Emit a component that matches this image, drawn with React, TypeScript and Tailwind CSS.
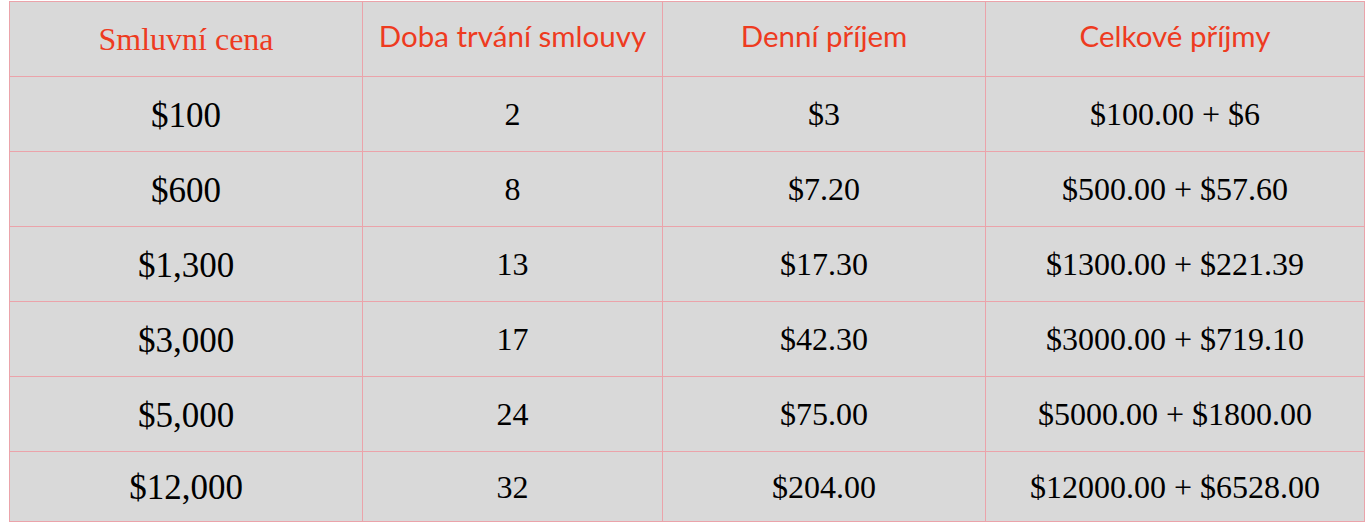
const rows = [
  ['$100', '2', '$3', '$100.00 + $6'],
  ['$600', '8', '$7.20', '$500.00 + $57.60'],
  ['$1,300', '13', '$17.30', '$1300.00 + $221.39'],
  ['$3,000', '17', '$42.30', '$3000.00 + $719.10'],
  ['$5,000', '24', '$75.00', '$5000.00 + $1800.00'],
  ['$12,000', '32', '$204.00', '$12000.00 + $6528.00'],
];

const cell = 'flex items-center justify-center border-b border-r border-[#eba3aa]';

export default function App() {
  return (
    <div className="h-[528px] w-[1372px] bg-white pl-[9px] pt-[1px]">
      <div className="grid w-[1356px] grid-cols-[353px_300px_323px_379px] border-l border-t border-[#eba3aa] bg-[#d9d9d9]">
        {/* header row */}
        <div className={`${cell} h-[75px] font-['Liberation_Serif','Times_New_Roman',serif] text-[32px] text-[#ee3b1f]`}>
          Smluvní cena
        </div>
        <div className={`${cell} h-[75px] pb-[6px] font-['Lato','Open_Sans',sans-serif] text-[29.5px] text-[#ee3b1f]`}>
          Doba trvání smlouvy
        </div>
        <div className={`${cell} h-[75px] pb-[6px] font-['Lato','Open_Sans',sans-serif] text-[29.5px] text-[#ee3b1f]`}>
          Denní příjem
        </div>
        <div className={`${cell} h-[75px] pb-[6px] font-['Lato','Open_Sans',sans-serif] text-[29.5px] text-[#ee3b1f]`}>
          Celkové příjmy
        </div>

        {rows.map((row, i) =>
          row.map((value, j) => (
            <div
              key={`${i}-${j}`}
              className={`${cell} font-['Liberation_Serif','Times_New_Roman',serif] text-black ${
                j === 0 ? 'pt-[4px] text-[35px]' : 'text-[32px]'
              } ${i === rows.length - 1 ? 'h-[70px]' : 'h-[75px]'}`}
            >
              {value}
            </div>
          ))
        )}
      </div>
    </div>
  );
}
